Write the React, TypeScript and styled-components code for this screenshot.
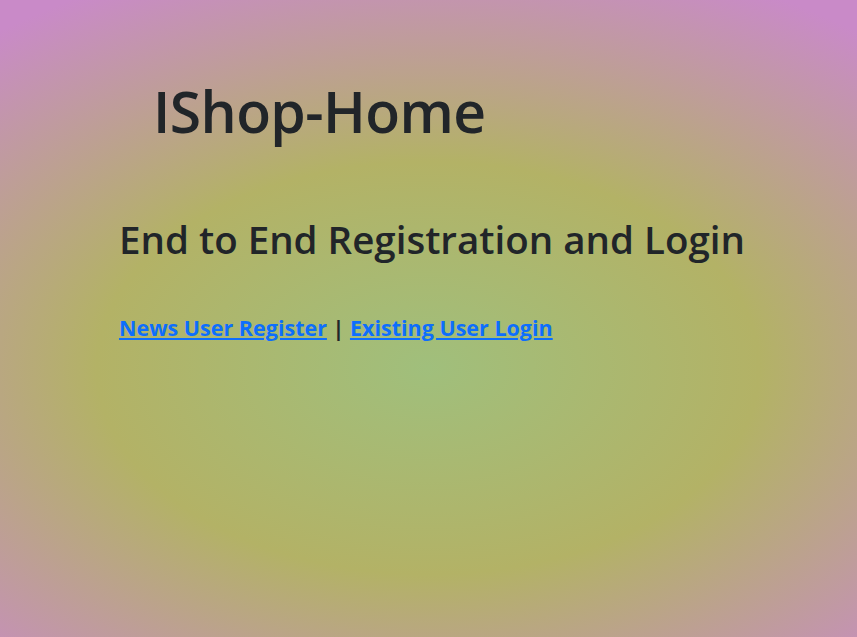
import React from "react";
import styled, { createGlobalStyle } from "styled-components";

const Global = createGlobalStyle`
  html, body { margin: 0; padding: 0; }
  body {
    min-height: 637px;
    font-family: "Open Sans", "Noto Sans", sans-serif;
    color: #212529;
    background: radial-gradient(ellipse 690px 430px at 428px 368px, #a0bf7c 0%, #b3b266 48%, #c98ac8 100%);
    background-color: #c98ac8;
  }
`;

const Page = styled.div`
  display: flex;
  flex-direction: column;
  padding: 79px 0 0 119px;
`;

const Brand = styled.h1`
  margin: 0 0 0 34px;
  font-size: 57px;
  font-weight: 600;
  line-height: 64px;
  letter-spacing: -0.6px;
`;

const Heading = styled.h2`
  margin: 74px 0 0 0;
  font-size: 38.5px;
  font-weight: 600;
  line-height: 44px;
  letter-spacing: 0px;
`;

const Links = styled.p`
  margin: 52px 0 0 0;
  font-size: 21.5px;
  font-weight: 700;
  line-height: 30px;
`;

const Link = styled.a`
  color: #0d6efd;
  text-decoration: underline;
`;

export default function App() {
  return (
    <>
      <Global />
      <Page>
        <Brand>IShop-Home</Brand>
        <Heading>End to End Registration and Login</Heading>
        <Links>
          <Link href="#">News User Register</Link> | <Link href="#">Existing User Login</Link>
        </Links>
      </Page>
    </>
  );
}
